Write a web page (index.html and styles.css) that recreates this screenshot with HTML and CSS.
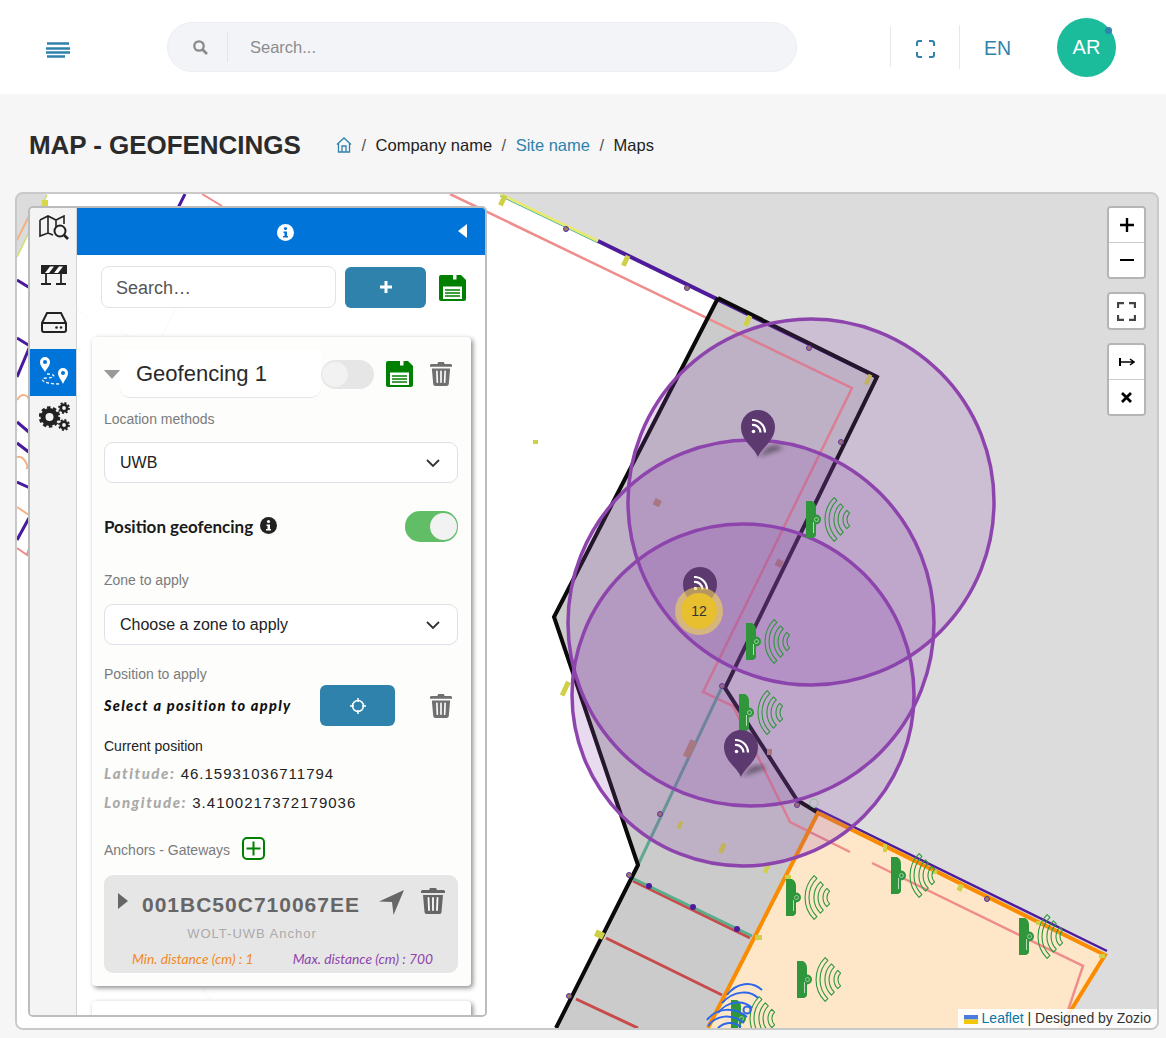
FILE: index.html
```html
<!DOCTYPE html>
<html lang="en">
<head>
<meta charset="utf-8">
<title>Map - Geofencings</title>
<link rel="stylesheet" href="styles.css">
</head>
<body>
<svg class="defs" aria-hidden="true">
  <symbol id="save" viewBox="0 0 27 26">
    <path d="M2 0H22L27 5V24a2 2 0 0 1-2 2H2a2 2 0 0 1-2-2V2a2 2 0 0 1 2-2Z" fill="#008000"/>
    <path d="M14 0h3.500v4.500H14Z" fill="#fff"/>
    <path d="M4 11.500H23V24H4Z" fill="#fff"/>
    <path d="M6 15h15M6 18h15M6 21h15" stroke="#008000" stroke-width="1.500"/>
  </symbol>
  <symbol id="trash" viewBox="0 0 24 26">
    <path d="M0 3.500C0 2.500 1 2 2 2H8L9 0H15L16 2H22C23 2 24 2.500 24 3.500V5H0Z" fill="currentColor"/>
    <path d="M2 7H22L20.500 24a2 2 0 0 1-2 2H5.500a2 2 0 0 1-2-2Z" fill="currentColor"/>
    <path d="M7.500 10l.5 12M12 10v12M16.500 10l-.5 12" stroke="#fdfdfb" stroke-width="1.800" stroke-linecap="round"/>
  </symbol>
  <symbol id="chev" viewBox="0 0 14 8">
    <path d="M1 1l6 6 6-6" fill="none" stroke="#333" stroke-width="1.800"/>
  </symbol>
  <symbol id="anchor" viewBox="-1 -5 54 48" overflow="visible">
    <path d="M0 0H6Q10 2 10 7V13.500a5 5 0 0 1 0 10V34Q10 36 7 37H0Z" fill="#2f963c"/>
    <circle cx="10.500" cy="18.500" r="2" fill="none" stroke="#fff" stroke-width=".7" opacity=".7"/>
    <path d="M7.500 21V32" stroke="#fff" stroke-width="1" opacity=".65"/>
    <g fill="none" stroke="#2f963c" stroke-width="1.100" stroke-linejoin="round">
      <path d="M28.100-3.400A31 31 0 0 0 28.100 40.400L30.900 37.600A27 27 0 0 1 30.900-.6Z"/>
      <path d="M34.400 2.900A22 22 0 0 0 34.400 34.100L37.300 31.200A18 18 0 0 1 37.300 5.800Z"/>
      <path d="M40.800 9.300A13 13 0 0 0 40.800 27.700L43.600 24.900A9 9 0 0 1 43.600 12.100Z"/>
    </g>
  </symbol>
  <symbol id="pin" viewBox="0 0 34 47">
    <path d="M17 47C13 37 0 31 0 17A17 17 0 0 1 34 17C34 31 21 37 17 47Z" fill="#5c3a70"/>
    <g fill="none" stroke="#fff" stroke-width="2.200">
      <path d="M11 10A12.500 12.500 0 0 1 24 22.500"/>
      <path d="M11 15A7.500 7.500 0 0 1 19.500 22.500"/>
    </g>
    <circle cx="12.500" cy="21.500" r="1.800" fill="#fff"/>
  </symbol>
  <filter id="blur"><feGaussianBlur stdDeviation="2.500"/></filter>
</svg>

<header class="topbar">
  <button class="burger" aria-label="Menu">
    <svg width="24" height="16" viewBox="0 0 24 16"><path d="M1 1.500H23M0 6.500H24M0 10.500H24M1 14.500H19" stroke="#2f82ac" stroke-width="2.500"/></svg>
  </button>
  <div class="topsearch">
    <svg class="topsearch-ico" width="15" height="15" viewBox="0 0 15 15"><circle cx="6" cy="6" r="4.700" fill="none" stroke="#8a8a8a" stroke-width="2.300"/><path d="M9.500 9.500L14 14" stroke="#8a8a8a" stroke-width="2.600"/></svg>
    <span class="topsearch-sep"></span>
    <span class="topsearch-text">Search...</span>
  </div>
  <span class="vsep first"></span>
  <svg class="fs-ico" width="19" height="18" viewBox="0 0 19 18"><path d="M1 6V3a2 2 0 0 1 2-2h3M13 1h3a2 2 0 0 1 2 2v3M18 12v3a2 2 0 0 1-2 2h-3M6 17H3a2 2 0 0 1-2-2v-3" fill="none" stroke="#2f82ac" stroke-width="2"/></svg>
  <span class="vsep second"></span>
  <span class="lang">EN</span>
  <div class="avatar">AR<span class="avatar-dot"></span></div>
</header>

<div class="titlebar">
  <h1 class="title">MAP - GEOFENCINGS</h1>
  <nav class="crumbs">
    <svg width="16" height="16" viewBox="0 0 16 16"><path d="M1 7.500L8 1l7 6.500M2.500 6.500V15h11V6.500M6 15V9h4v6" fill="none" stroke="#2f82ac" stroke-width="1.300"/></svg>
    <span class="crumb-sep">/</span><span>Company name</span>
    <span class="crumb-sep">/</span><span class="crumb-link">Site name</span>
    <span class="crumb-sep">/</span><span>Maps</span>
  </nav>
</div>

<main class="map">
  <svg class="map-canvas" viewBox="17 194 1140 834" width="1140" height="834">
    <rect x="17" y="194" width="1140" height="834" fill="#dcdcdc"/>
    <path d="M17 256L47 194H500L718 298L554 617L638 865L556 1028H17Z" fill="#fff"/>
    <path d="M718 298L877 377L725 688L797 800L818 812L708 1028H556L638 865L554 617Z" fill="#cbcbcb"/>
    <path d="M818 812L1105 955L1060 1028H708Z" fill="#fee7c8"/>

    <!-- left side plan fragments -->
    <g fill="none" stroke-width="3">
      <path d="M17 280L30 288M17 338L30 346L17 377M17 422L30 433M17 443L30 453M17 482L30 488M29 518L17 540M185 194L176 212" stroke="#4a1a9e"/>
      <path d="M17 257L47 195" stroke="#c8e070" stroke-width="1.500"/>
      <path d="M17 400C22 392 28 395 29 400M17 457C25 455 30 470 26 468M17 507L29 515M17 240L30 214" stroke="#f4b183" stroke-width="2"/>
      <path d="M202 194L222 206M17 548L27 555L30 545" stroke="#f08a8a" stroke-width="2"/>
      <rect x="42" y="200" width="6" height="6" fill="#d8d84a" stroke="none"/>
      <path d="M118 330L190 370M190 280L160 340M90 320L30 270M150 900L210 1000" stroke="#4a1a9e" stroke-width="2" opacity=".5"/>
    </g>

    <!-- walls and lines -->
    <g fill="none" stroke-linejoin="miter">
      <path d="M450 194L852 388L703 692L733 706L790 822L850 852M872 863L1083 966L1062 1028" stroke="#ef8d8d" stroke-width="2.500"/>
      <path d="M500 194L598 241" stroke="#e8ea6a" stroke-width="2.500"/>
      <path d="M500 196L598 243" stroke="#58b28a" stroke-width="1"/>
      <path d="M598 241L877 377" stroke="#4e1c9a" stroke-width="4"/>
      <path d="M722 687L638 865" stroke="#5fa893" stroke-width="3"/>
      <path d="M633 881L750 938" stroke="#c84a4a" stroke-width="3"/>
      <path d="M632 878L752 936" stroke="#58ad8a" stroke-width="3"/>
      <path d="M606 938L722 995M576 999L638 1028" stroke="#c84a4a" stroke-width="3"/>
      <path d="M815 808L1107 951" stroke="#4e1c9a" stroke-width="2.500"/>
      <path d="M718 298L877 377L725 688L797 800L820 814" stroke="#0a0a0a" stroke-width="4"/>
      <path d="M718 298L554 617L638 865L556 1028" stroke="#0a0a0a" stroke-width="4"/>
      <path d="M708 1028L818 813L1105 955L1060 1028" stroke="#fb8c00" stroke-width="4"/>
      <circle cx="814" cy="803" r="4" stroke="#a5e0ae" stroke-width="1.500"/>
    </g>
    <g fill="#d0d048">
      <rect x="500" y="195" width="5" height="11" transform="rotate(25 503 201)"/>
      <rect x="623" y="255" width="5" height="11" transform="rotate(25 625 261)"/>
      <rect x="745" y="315" width="5" height="11" transform="rotate(25 747 321)"/>
      <rect x="866" y="374" width="4" height="11" transform="rotate(25 868 380)"/>
      <rect x="533" y="440" width="5" height="4"/>
      <rect x="563" y="681" width="5" height="15" transform="rotate(25 565 688)"/>
      <rect x="595" y="930" width="9" height="7" transform="rotate(25 597 934)"/>
      <rect x="755" y="935" width="7" height="5"/>
      <rect x="883" y="844" width="4" height="8"/>
      <rect x="958" y="884" width="5" height="7" transform="rotate(25 960 887)"/>
      <rect x="1036" y="921" width="6" height="4"/>
      <rect x="1099" y="954" width="6" height="4"/>
      <rect x="785" y="875" width="6" height="4"/>
      <rect x="932" y="870" width="5" height="4"/>
      <rect x="720" y="843" width="5" height="10" transform="rotate(25 722 848)"/>
      <rect x="678" y="821" width="4" height="8" transform="rotate(25 680 825)"/>
      <rect x="765" y="864" width="4" height="9" transform="rotate(25 767 868)"/>
    </g>
    <g fill="#9a8060" stroke="#5a2ca0" stroke-width="1">
      <circle cx="566" cy="229" r="2.500"/><circle cx="687" cy="288" r="2.500"/><circle cx="809" cy="348" r="2.500"/>
      <circle cx="841" cy="442" r="2.500"/><circle cx="722" cy="686" r="2.500"/><circle cx="797" cy="805" r="2.500"/>
      <circle cx="660" cy="814" r="2.500"/><circle cx="629" cy="875" r="2.500"/><circle cx="569" cy="996" r="2.500"/>
      <circle cx="987" cy="899" r="2.500"/>
    </g>
    <g fill="#4e1c9a">
      <circle cx="649" cy="886" r="3"/><circle cx="693" cy="907" r="3"/><circle cx="737" cy="929" r="3"/>
    </g>
    <g fill="#b89468">
      <rect x="654" y="499" width="7" height="7" transform="rotate(25 657 502)"/>
      <rect x="776" y="560" width="7" height="7" transform="rotate(25 780 563)"/>
      <rect x="686" y="740" width="7" height="18" transform="rotate(25 690 750)"/>
      <rect x="767" y="749" width="5" height="6"/>
    </g>

    <!-- geofence circles -->
    <g fill="#8e44ad" fill-opacity=".2" stroke="#8e44ad" stroke-width="3.500">
      <circle cx="811" cy="502" r="183"/>
      <circle cx="751" cy="623" r="183"/>
      <circle cx="743" cy="695" r="171"/>
    </g>

    <!-- anchors -->
    <g>
      <use href="#anchor" x="805" y="496" width="54" height="48"/>
      <use href="#anchor" x="745" y="618" width="54" height="48"/>
      <use href="#anchor" x="738" y="689" width="54" height="48"/>
      <use href="#anchor" x="785" y="874" width="54" height="48"/>
      <use href="#anchor" x="890" y="852" width="54" height="48"/>
      <use href="#anchor" x="1018" y="913" width="54" height="48"/>
      <use href="#anchor" x="796" y="956" width="54" height="48"/>
      <use href="#anchor" x="730" y="995" width="54" height="48"/>
    </g>
    <g fill="none" stroke="#2a67ea" stroke-width="2">
      <path d="M727 995C737 982 752 981 762 990M722 1003C734 990 750 990 758 998M718 1013C728 1000 744 1000 752 1008"/>
      <path d="M707 1020C716 1008 734 1006 747 1017M708 1026C716 1015 732 1013 744 1023M718 1028C724 1022 734 1021 741 1027"/>
      <circle cx="747" cy="1010" r="3.500"/>
    </g>

    <!-- pins -->
    <g>
      <path d="M758 457L784 448L776 445L768 447Z" fill="#000" opacity=".45" filter="url(#blur)"/>
      <use href="#pin" x="741" y="410" width="34" height="47"/>
      <path d="M741 777L767 768L759 765L751 767Z" fill="#000" opacity=".45" filter="url(#blur)"/>
      <use href="#pin" x="724" y="730" width="34" height="47"/>
      <use href="#pin" x="683" y="567" width="34" height="47"/>
      <circle cx="699" cy="611" r="24" fill="#f1d357" fill-opacity=".6"/>
      <circle cx="699" cy="611" r="18" fill="#e8bf2e"/>
      <text class="cluster-text" x="699" y="616">12</text>
    </g>
  </svg>

  <aside class="panel">
    <div class="rail">
      <div class="rail-item">
        <svg width="30" height="26" viewBox="0 0 30 26"><g fill="none" stroke="#222" stroke-width="1.600"><path d="M1 5L9 1L17 5L25 1V9M9 1V18M17 5V12M1 5V21L9 18L14 20"/><circle cx="21" cy="16" r="5.500" stroke-width="2"/><path d="M25 20L29 24" stroke-width="2.600"/></g></svg>
      </div>
      <div class="rail-item">
        <svg width="26" height="20" viewBox="0 0 26 20"><path d="M0 0H26V9H0Z" fill="#222"/><path d="M4 8L9 1.500H13L8 8ZM13 8L18 1.500H22L17 8Z" fill="#fff"/><path d="M5 9V18M20 9V18M0 19H10M15 19H25" stroke="#222" stroke-width="1.800"/></svg>
      </div>
      <div class="rail-item">
        <svg width="26" height="22" viewBox="0 0 26 22"><path d="M6 2H20L25 12V19a2 2 0 0 1-2 2H3a2 2 0 0 1-2-2V12ZM1 12H25" fill="none" stroke="#222" stroke-width="2"/><circle cx="20" cy="16.500" r="1.300" fill="#222"/><circle cx="15.500" cy="16.500" r="1.300" fill="#222"/></svg>
      </div>
      <div class="rail-item active">
        <svg width="30" height="30" viewBox="0 0 30 30"><path d="M6 0A5 5 0 0 1 11 5C11 9 8 11 6 15C4 11 1 9 1 5A5 5 0 0 1 6 0Z" fill="#fff"/><circle cx="6" cy="5" r="2" fill="#0074d9"/><path d="M24 11A5 5 0 0 1 29 16C29 20 26 22 24 27C22 22 19 20 19 16A5 5 0 0 1 24 11Z" fill="#fff"/><circle cx="24" cy="16" r="2" fill="#0074d9"/><path d="M8 17C18 17 16 21 8 21C-1 21 3 27 20 27" fill="none" stroke="#fff" stroke-width="1.300" stroke-dasharray="3 2"/></svg>
      </div>
      <div class="rail-item">
        <svg width="31" height="29" viewBox="0 0 31 29"><g fill="none" stroke="#222"><circle cx="10.500" cy="15" r="6.500" stroke-width="5"/><circle cx="10.500" cy="15" r="9.500" stroke-width="2.500" stroke-dasharray="3.500 2.500"/><circle cx="25" cy="6" r="3.200" stroke-width="2.600"/><circle cx="25" cy="6" r="5" stroke-width="1.800" stroke-dasharray="2 1.900"/><circle cx="25" cy="23" r="3.200" stroke-width="2.600"/><circle cx="25" cy="23" r="5" stroke-width="1.800" stroke-dasharray="2 1.900"/></g></svg>
      </div>
    </div>

    <div class="side">
      <div class="side-head">
        <svg class="head-info" width="17" height="17" viewBox="0 0 17 17"><circle cx="8.500" cy="8.500" r="8.500" fill="#fff"/><circle cx="8.500" cy="4.500" r="1.600" fill="#0074d9"/><path d="M6.500 7.500H10V12H11V13.500H6V12H7.500V9H6.500Z" fill="#0074d9"/></svg>
        <svg class="head-arrow" width="9" height="14" viewBox="0 0 9 14"><path d="M9 0V14L0 7Z" fill="#fff"/></svg>
      </div>
      <div class="side-tools">
        <div class="side-search">Search…</div>
        <button class="btn btn-add" aria-label="Add"><svg width="12" height="12" viewBox="0 0 12 12"><path d="M6 0V12M0 6H12" stroke="#fff" stroke-width="3"/></svg></button>
        <svg class="save-main"><use href="#save"/></svg>
      </div>

      <div class="side-scroll">
        <section class="card">
          <div class="card-head">
            <span class="tri-down"></span>
            <div class="name-input">Geofencing 1</div>
            <span class="toggle"><span class="knob"></span></span>
            <svg class="save-card"><use href="#save"/></svg>
            <svg class="trash"><use href="#trash"/></svg>
          </div>
          <div class="label label-loc">Location methods</div>
          <div class="select">UWB<svg class="chev"><use href="#chev"/></svg></div>

          <div class="posgeo">
            <span class="strong">Position geofencing</span>
            <svg class="posgeo-info" width="17" height="17" viewBox="0 0 17 17"><circle cx="8.500" cy="8.500" r="8.500" fill="#222"/><circle cx="8.500" cy="4.500" r="1.600" fill="#fff"/><path d="M6.500 7.500H10V12H11V13.500H6V12H7.500V9H6.500Z" fill="#fff"/></svg>
            <span class="toggle on"><span class="knob"></span></span>
          </div>

          <div class="label label-zone">Zone to apply</div>
          <div class="select">Choose a zone to apply<svg class="chev"><use href="#chev"/></svg></div>

          <div class="label label-pos">Position to apply</div>
          <div class="apply">
            <span class="apply-text">Select a position to apply</span>
            <button class="btn btn-target" aria-label="Select position"><svg width="18" height="18" viewBox="0 0 18 18"><circle cx="9" cy="9" r="5.500" fill="none" stroke="#fff" stroke-width="1.500"/><path d="M9 1V5M9 13V17M1 9H5M13 9H17" stroke="#fff" stroke-width="1.500"/></svg></button>
            <svg class="trash"><use href="#trash"/></svg>
          </div>

          <div class="current">Current position</div>
          <div class="coord coord-lat"><b>Latitude:</b> 46.15931036711794</div>
          <div class="coord coord-lng"><b>Longitude:</b> 3.4100217372179036</div>

          <div class="anchors-head">
            <span class="label anchors-label">Anchors - Gateways</span>
            <svg width="23" height="23" viewBox="0 0 23 23"><rect x="1" y="1" width="21" height="21" rx="4" fill="none" stroke="#008000" stroke-width="2"/><path d="M11.500 4.500V18.500M4.500 11.500H18.500" stroke="#008000" stroke-width="2"/></svg>
          </div>

          <div class="anchor-card">
            <div class="anchor-top">
              <span class="tri-right"></span>
              <span class="anchor-id">001BC50C710067EE</span>
              <svg class="nav-ico" width="25" height="25" viewBox="0 0 25 25"><path d="M25 0L0 11.500L13 12L14.500 25Z" fill="#666"/></svg>
              <svg class="trash trash-dark"><use href="#trash"/></svg>
            </div>
            <div class="anchor-type">WOLT-UWB Anchor</div>
            <div class="anchor-dist"><span class="dist-min">Min. distance (cm) : 1</span><span class="dist-max">Max. distance (cm) : 700</span></div>
          </div>
        </section>
        <section class="card card-next"></section>
      </div>
    </div>
  </aside>

  <div class="controls">
    <div class="ctl-group">
      <button class="ctl" aria-label="Zoom in"><svg width="16" height="16" viewBox="0 0 16 16"><path d="M8 1V15M1 8H15" stroke="#000" stroke-width="2.400"/></svg></button>
      <button class="ctl" aria-label="Zoom out"><svg width="16" height="16" viewBox="0 0 16 16"><path d="M1 8H15" stroke="#000" stroke-width="2"/></svg></button>
    </div>
    <div class="ctl-group">
      <button class="ctl" aria-label="Fullscreen"><svg width="19" height="19" viewBox="0 0 19 19"><path d="M1 6V1H7M12 1H18V6M18 13V18H12M7 18H1V13" fill="none" stroke="#444" stroke-width="2.300"/></svg></button>
    </div>
    <div class="ctl-group">
      <button class="ctl" aria-label="Measure"><svg width="16" height="10" viewBox="0 0 16 10"><path d="M1 1V9" stroke="#000" stroke-width="2"/><path d="M1 5H14M11 2L15 5L11 8" fill="none" stroke="#000" stroke-width="1.500"/></svg></button>
      <button class="ctl" aria-label="Clear"><svg width="11" height="11" viewBox="0 0 11 11"><path d="M1 1L10 10M10 1L1 10" stroke="#000" stroke-width="2.800"/></svg></button>
    </div>
  </div>

  <div class="attrib"><svg class="attrib-flag" width="14" height="9" viewBox="0 0 14 9"><rect width="14" height="4.500" fill="#4c7be0"/><rect y="4.500" width="14" height="4.500" fill="#f0c808"/></svg><span class="attrib-link">Leaflet</span> | Designed by Zozio</div>
</main>
</body>
</html>
```

FILE: styles.css
```css
* { box-sizing: border-box; }
html, body { margin: 0; padding: 0; }
body {
  width: 1166px;
  height: 1038px;
  overflow: hidden;
  background: #f6f6f7;
  font-family: "Liberation Sans", Arial, sans-serif;
  color: #222;
}
button { border: 0; padding: 0; background: none; font: inherit; }
.defs { position: absolute; width: 0; height: 0; }

/* top bar */
.topbar {
  height: 94px;
  background: #fff;
  display: flex;
  align-items: center;
}
.burger { margin-left: 46px; width: 24px; height: 16px; display: block; margin-top: 5px; }
.burger svg { display: block; }
.topsearch {
  margin-left: 97px;
  width: 630px;
  height: 50px;
  border-radius: 25px;
  background: #f3f4f8;
  border: 1px solid #eceef2;
  display: flex;
  align-items: center;
}
.topsearch-ico { margin-left: 25px; }
.topsearch-sep { width: 1px; height: 30px; background: #e4e5ea; margin-left: 19px; }
.topsearch-text { margin-left: 22px; font-size: 16.500px; color: #8c8c8c; margin-top: 1px; }
.vsep { width: 1px; background: #e8e8ea; }
.vsep.first { height: 40px; margin-left: 93px; }
.fs-ico { margin-left: 25px; margin-top: 4px; }
.vsep.second { height: 44px; margin-left: 24px; }
.lang { margin-left: 24px; font-size: 19.500px; color: #2f82ac; width: 26px; margin-top: 2px; }
.avatar {
  margin-left: 47px;
  width: 59px;
  height: 59px;
  border-radius: 50%;
  background: #1abc9c;
  color: #fff;
  font-size: 20px;
  display: flex;
  align-items: center;
  justify-content: center;
  position: relative;
}
.avatar-dot {
  position: absolute;
  right: 4px;
  top: 9px;
  width: 7px;
  height: 7px;
  border-radius: 50%;
  background: #2f82ac;
}

/* title */
.titlebar {
  height: 98px;
  padding: 4px 0 0 29px;
  display: flex;
  align-items: center;
}
.title { margin: 0; font-size: 26px; font-weight: 700; letter-spacing: -.05px; color: #2b2b2b; width: 307px; white-space: nowrap; }
.crumbs { display: flex; align-items: center; font-size: 16.500px; color: #222; }
.crumb-sep { margin: 0 9.500px; color: #555; }
.crumb-link { color: #2f82ac; }

/* map */
.map {
  position: relative;
  margin: 0 7px 0 15px;
  width: 1144px;
  height: 838px;
  border: 2px solid #c9c9c9;
  border-radius: 8px;
  overflow: hidden;
  background: #dcdcdc;
}
.map-canvas { position: absolute; left: 0; top: 0; display: block; }
.cluster-text { font: 14px "Liberation Sans", Arial, sans-serif; fill: #333; text-anchor: middle; }

/* panel */
.panel {
  position: absolute;
  left: 11px;
  top: 12px;
  width: 459px;
  height: 811px;
  border: 2px solid #bcbcbc;
  border-radius: 5px;
  overflow: hidden;
  display: flex;
}
.rail {
  width: 47px;
  flex: none;
  background: #f4f4f5;
  border-right: 1px solid #d4d4d4;
}
.rail-item { height: 47px; padding: 0 0 7px 2px; display: flex; align-items: center; justify-content: center; }
.rail-item.active { background: #0074d9; padding-bottom: 2px; }
.side { flex: 1; display: flex; flex-direction: column; background: rgba(255,255,255,.96); min-width: 0; }
.side-head {
  height: 47px;
  flex: none;
  background: #0074d9;
  position: relative;
  display: flex;
  align-items: center;
  justify-content: center;
}
.head-info { margin-left: 8px; margin-top: 2px; }
.head-arrow { position: absolute; right: 18px; top: 16px; }
.side-tools { display: flex; align-items: center; padding: 11px 0 0 24px; }
.side-search {
  width: 235px;
  height: 42px;
  border: 1px solid #e2e2e8;
  border-radius: 8px;
  background: #fff;
  font-size: 18px;
  color: #555;
  padding: 2px 0 0 14px;
  display: flex;
  align-items: center;
}
.btn { background: #2f82ac; border-radius: 6px; display: flex; align-items: center; justify-content: center; }
.btn-add { width: 81px; height: 41px; margin-left: 9px; }
.save-main { width: 27px; height: 26px; margin-left: 13px; margin-top: 2px; }

.side-scroll { padding: 29px 14px 0 15px; display: flex; flex-direction: column; gap: 15px; }
.card {
  width: 379px;
  flex: none;
  background: #fdfdfb;
  border-radius: 4px;
  box-shadow: 2px 2px 5px rgba(0,0,0,.45);
  padding: 13px 13px 13px 12px;
}
.card-next { height: 40px; background: #fff; }
.card-head { display: flex; align-items: center; height: 48px; }
.tri-down { width: 0; height: 0; border-left: 8.500px solid transparent; border-right: 8.500px solid transparent; border-top: 9px solid #999; flex: none; }
.name-input {
  width: 201px;
  height: 48px;
  border-bottom: 1px solid #e6e6e6;
  border-radius: 0 0 10px 10px;
  background: #fff;
  font-size: 22px;
  color: #2a2a2a;
  padding-left: 16px;
  display: flex;
  align-items: center;
}
.toggle {
  width: 53px;
  height: 29px;
  border-radius: 15px;
  background: #e6e6e6;
  position: relative;
  flex: none;
  display: block;
}
.knob {
  position: absolute;
  left: 1px;
  top: 2px;
  width: 26px;
  height: 25px;
  border-radius: 50%;
  background: #f2f2f2;
}
.toggle.on { background: #61bd66; height: 31px; }
.toggle.on .knob { left: auto; right: 1px; top: 2px; width: 27px; height: 27px; background: #f2f2f2; }
.save-card { width: 27px; height: 26px; margin-left: 12px; flex: none; }
.trash { width: 22px; height: 26px; margin-left: 17px; color: #707070; flex: none; }
.label { font-size: 14px; color: #7b7b7b; }
.label-loc { margin-top: 13px; }
.select {
  margin-top: 15px;
  width: 354px;
  height: 41px;
  border: 1px solid #dfe0e8;
  border-radius: 9px;
  background: #fff;
  font-size: 16px;
  color: #222;
  padding: 1px 0 0 15px;
  display: flex;
  align-items: center;
  justify-content: space-between;
}
.chev { width: 14px; height: 8px; margin-right: 17px; }
.posgeo { display: flex; align-items: center; margin-top: 28px; height: 31px; width: 354px; }
.strong { font-family: Lato, "Liberation Sans", sans-serif; font-weight: 700; font-size: 17px; color: #1a1a1a; margin-top: -1px; }
.posgeo-info { margin-left: 7px; margin-top: -2px; }
.posgeo .toggle { margin-left: auto; }
.label-zone { margin-top: 30px; }
.select + .label-pos { margin-top: 21px; }
.label-zone + .select { margin-top: 16px; }
.apply { display: flex; align-items: center; height: 41px; margin-top: 3px; }
.apply-text {
  width: 216px;
  font-family: Lato, "Liberation Sans", sans-serif;
  font-weight: 900;
  font-style: italic;
  font-size: 14.500px;
  letter-spacing: 1.300px;
  color: #111;
  white-space: nowrap;
  margin-top: -1px;
}
.btn-target { width: 75px; height: 41px; }
.apply .trash { margin-left: 35px; }
.current { font-size: 14px; color: #222; margin-top: 12px; }
.coord { font-size: 15px; letter-spacing: 1px; color: #222; }
.coord b { font-family: Lato, "Liberation Sans", sans-serif; font-style: italic; font-weight: 900; color: #aaa; letter-spacing: 1.550px; }
.coord-lat { margin-top: 10px; }
.coord-lng { margin-top: 11px; }
.anchors-head { display: flex; align-items: center; gap: 12px; margin-top: 26px; height: 23px; }
.anchors-label { margin-top: 2px; }
.anchor-card {
  margin-top: 15px;
  width: 354px;
  height: 98px;
  border-radius: 9px;
  background: #e7e6e6;
  padding: 12px 13px 0 14px;
  position: relative;
}
.anchor-top { display: flex; align-items: center; height: 28px; }
.tri-right { width: 0; height: 0; border-top: 8.500px solid transparent; border-bottom: 8.500px solid transparent; border-left: 10px solid #666; flex: none; margin-top: 0; }
.anchor-id { margin-left: 14px; width: 237px; font-size: 21px; font-weight: 700; letter-spacing: 1px; color: #666; white-space: nowrap; margin-top: 8px; }
.nav-ico { flex: none; margin-top: 3px; }
.trash-dark { margin-left: 17px; color: #666; width: 24px; margin-top: -1px; }
.anchor-type { text-align: center; margin: 11px 0 0 -3px; font-size: 13px; letter-spacing: 1px; color: #aaa; width: 274px; }
.anchor-dist { display: flex; justify-content: space-between; margin-top: 9px; padding: 0 12px 0 14px; font-family: Lato, "Liberation Sans", sans-serif; font-size: 13.800px; font-style: italic; }
.dist-min { color: #f08a24; }
.dist-max { color: #8e44ad; }

/* map controls */
.controls {
  position: absolute;
  right: 11px;
  top: 12px;
  width: 39px;
  display: flex;
  flex-direction: column;
  gap: 13px;
}
.ctl-group { border: 2px solid #b5b5b5; border-radius: 4px; background: #fff; overflow: hidden; }
.ctl { display: flex; width: 100%; height: 34px; align-items: center; justify-content: center; background: #fff; }
.ctl + .ctl { border-top: 1px solid #ccc; height: 35px; }
.attrib {
  position: absolute;
  right: 0;
  bottom: 0;
  height: 19px;
  line-height: 19px;
  padding: 0 6px;
  background: rgba(255,255,255,.88);
  font-size: 14px;
  color: #333;
  white-space: nowrap;
}
.attrib-flag { margin-right: 4px; vertical-align: -1px; }
.attrib-link { color: #0078a8; }
```
